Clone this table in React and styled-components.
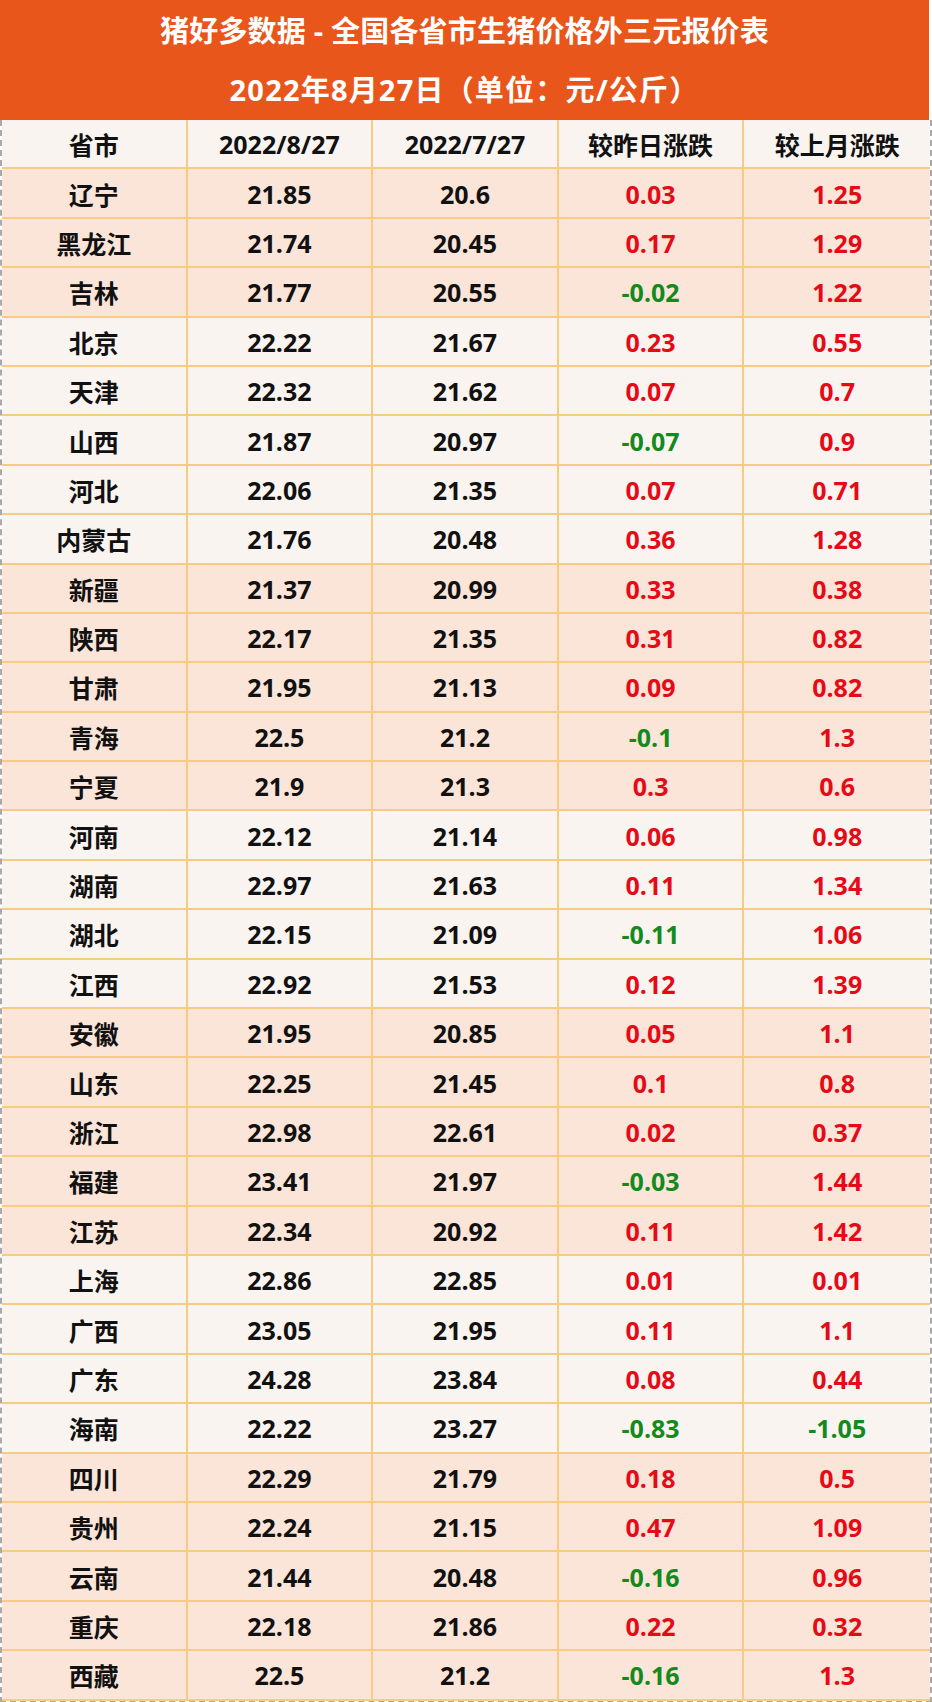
import React from 'react'
import styled, { createGlobalStyle } from 'styled-components'

const GlobalStyle = createGlobalStyle`
  html, body {
    margin: 0;
    padding: 0;
    background: #ffffff;
  }
  body {
    font-family: "Open Sans", "Noto Sans CJK SC", sans-serif;
  }
`

const pink = '#FBE4D8'
const light = '#F9F4F0'
const line = '#F6CB82'

const Page = styled.div`
  width: 932px;
  height: 1702px;
  box-sizing: border-box;
`

const Title = styled.div`
  width: 929px;
  height: 120px;
  background: #E8561B;
  color: #ffffff;
  font-weight: 700;
  display: flex;
  flex-direction: column;
  align-items: center;
  justify-content: center;
  gap: 15px;
`

const TitleLine = styled.div`
  font-size: 29px;
  line-height: 44px;
  white-space: nowrap;
  letter-spacing: ${p => p.$spread || '0.2px'};
`

const Table = styled.div`
  display: grid;
  grid-template-columns: repeat(5, 1fr);
  border-left: 2px dashed #a9a9a9;
  border-right: 2px dashed #a9a9a9;
  border-bottom: 2px dashed #a9a9a9;
`

const Cell = styled.div`
  height: 49.4px;
  box-sizing: border-box;
  display: flex;
  align-items: center;
  justify-content: center;
  background: ${p => (p.$shade ? pink : light)};
  border-bottom: 2px solid ${line};
  border-right: ${p => (p.$last ? 'none' : `2px solid ${line}`)};
  font-size: 25px;
  font-weight: 700;
  color: ${p => p.$color || '#111111'};
  white-space: nowrap;
  padding-top: 1px;
`

const rows = [
  ['辽宁', '21.85', '20.6', '0.03', '1.25'],
  ['黑龙江', '21.74', '20.45', '0.17', '1.29'],
  ['吉林', '21.77', '20.55', '-0.02', '1.22'],
  ['北京', '22.22', '21.67', '0.23', '0.55'],
  ['天津', '22.32', '21.62', '0.07', '0.7'],
  ['山西', '21.87', '20.97', '-0.07', '0.9'],
  ['河北', '22.06', '21.35', '0.07', '0.71'],
  ['内蒙古', '21.76', '20.48', '0.36', '1.28'],
  ['新疆', '21.37', '20.99', '0.33', '0.38'],
  ['陕西', '22.17', '21.35', '0.31', '0.82'],
  ['甘肃', '21.95', '21.13', '0.09', '0.82'],
  ['青海', '22.5', '21.2', '-0.1', '1.3'],
  ['宁夏', '21.9', '21.3', '0.3', '0.6'],
  ['河南', '22.12', '21.14', '0.06', '0.98'],
  ['湖南', '22.97', '21.63', '0.11', '1.34'],
  ['湖北', '22.15', '21.09', '-0.11', '1.06'],
  ['江西', '22.92', '21.53', '0.12', '1.39'],
  ['安徽', '21.95', '20.85', '0.05', '1.1'],
  ['山东', '22.25', '21.45', '0.1', '0.8'],
  ['浙江', '22.98', '22.61', '0.02', '0.37'],
  ['福建', '23.41', '21.97', '-0.03', '1.44'],
  ['江苏', '22.34', '20.92', '0.11', '1.42'],
  ['上海', '22.86', '22.85', '0.01', '0.01'],
  ['广西', '23.05', '21.95', '0.11', '1.1'],
  ['广东', '24.28', '23.84', '0.08', '0.44'],
  ['海南', '22.22', '23.27', '-0.83', '-1.05'],
  ['四川', '22.29', '21.79', '0.18', '0.5'],
  ['贵州', '22.24', '21.15', '0.47', '1.09'],
  ['云南', '21.44', '20.48', '-0.16', '0.96'],
  ['重庆', '22.18', '21.86', '0.22', '0.32'],
  ['西藏', '22.5', '21.2', '-0.16', '1.3'],
]

// region groups alternate shading
const shaded = i =>
  (i >= 0 && i <= 2) || (i >= 8 && i <= 12) || (i >= 17 && i <= 21) || i >= 26

const changeColor = v => (v.startsWith('-') ? '#138A1C' : '#E50A16')

const headers = ['省市', '2022/8/27', '2022/7/27', '较昨日涨跌', '较上月涨跌']

const App = () => (
  <Page>
    <GlobalStyle />
    <Title>
      <TitleLine>猪好多数据 - 全国各省市生猪价格外三元报价表</TitleLine>
      <TitleLine $spread="1.2px">2022年8月27日（单位：元/公斤）</TitleLine>
    </Title>
    <Table>
      {headers.map((h, i) => (
        <Cell key={h} $last={i === 4}>
          {h}
        </Cell>
      ))}
      {rows.map((r, i) =>
        r.map((v, j) => (
          <Cell
            key={`${i}-${j}`}
            $shade={shaded(i)}
            $last={j === 4}
            $color={j >= 3 ? changeColor(v) : undefined}
          >
            {v}
          </Cell>
        ))
      )}
    </Table>
  </Page>
)

export default App
